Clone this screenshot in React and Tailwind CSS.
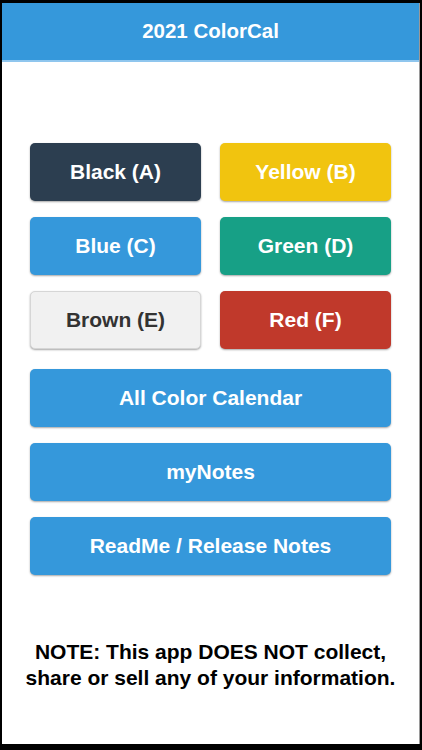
import React from "react";

const font = { fontFamily: '"Liberation Sans", Arial, Helvetica, sans-serif' };

function Btn({ cls, children }) {
  return (
    <div
      className={`h-[58px] rounded-[5px] flex items-center justify-center text-[21px] font-bold shadow-[0_1px_2px_rgba(0,0,0,0.35)] ${cls}`}
    >
      {children}
    </div>
  );
}

export default function App() {
  return (
    <div className="w-[422px] h-[750px] bg-black pt-[3px] pl-[2px] pr-[2px] pb-[6px]" style={font}>
      <div className="h-full bg-white border-r border-[#9a9a9a] flex flex-col">
        <div className="h-[59px] bg-[#3598db] border-b-2 border-[#8fc6ee] flex items-center justify-center">
          <span className="text-white text-[20.5px] font-bold leading-none">2021 ColorCal</span>
        </div>
        <div className="pl-[28px] pr-[28px] mt-[81px] flex flex-col">
          <div className="grid grid-cols-2 gap-x-[19px] gap-y-[16px]">
            <Btn cls="bg-[#2c3e50] text-white">Black (A)</Btn>
            <Btn cls="bg-[#f1c40f] text-white">Yellow (B)</Btn>
            <Btn cls="bg-[#3598db] text-white">Blue (C)</Btn>
            <Btn cls="bg-[#17a086] text-white">Green (D)</Btn>
            <Btn cls="bg-[#f1f1f1] text-[#333333] border border-[#d6d6d6]">Brown (E)</Btn>
            <Btn cls="bg-[#c0392b] text-white">Red (F)</Btn>
          </div>
          <div className="mt-[20px] flex flex-col gap-[16px]">
            <Btn cls="bg-[#3598db] text-white">All Color Calendar</Btn>
            <Btn cls="bg-[#3598db] text-white">myNotes</Btn>
            <Btn cls="bg-[#3598db] text-white">ReadMe / Release Notes</Btn>
          </div>
        </div>
        <div className="mt-[64px] text-center text-black font-bold text-[21px] leading-[26px]">
          NOTE: This app DOES NOT collect,
          <br />
          share or sell any of your information.
        </div>
      </div>
    </div>
  );
}
